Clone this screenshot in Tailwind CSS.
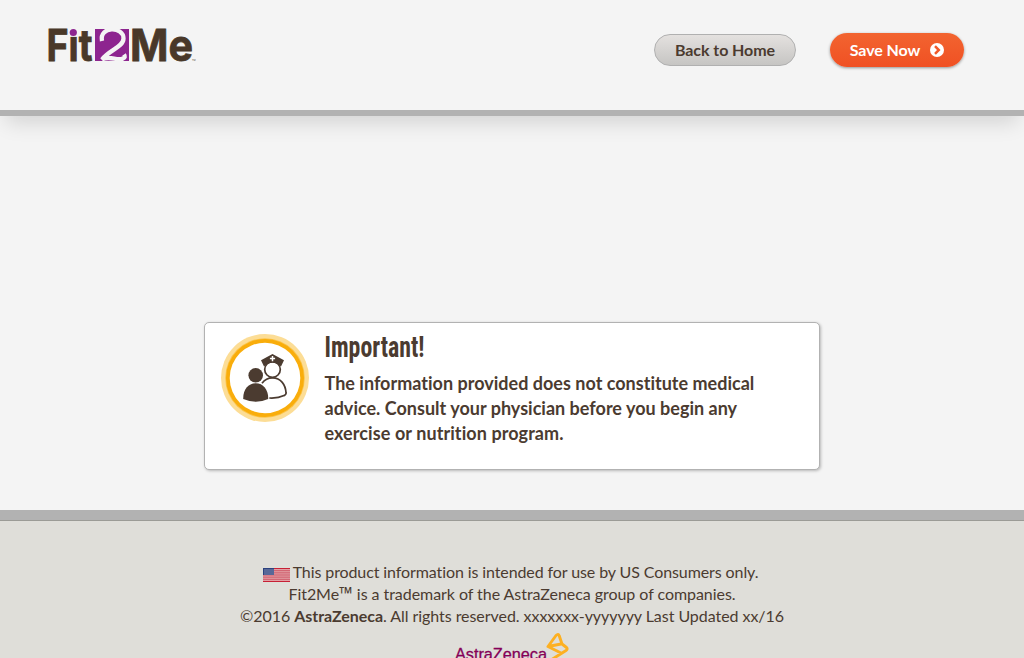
<!DOCTYPE html>
<html lang="en">
<head>
<meta charset="utf-8">
<title>Fit2Me</title>
<script src="https://cdn.jsdelivr.net/npm/@tailwindcss/browser@4"></script>
</head>
<body class="h-[658px] overflow-hidden bg-[#f4f4f4] font-[Lato,sans-serif] text-[#4b3b30] flex flex-col [font-variant-ligatures:none]">
<header class="h-[116px] shrink-0 border-b-6 border-[#b2b2b2] bg-[#f4f4f4] shadow-[0_12px_20px_-6px_rgba(0,0,0,0.14)] flex items-start justify-between pl-12 pr-[60px]">
  <svg class="mt-[26px] overflow-visible" width="150" height="40" viewBox="0 0 150 40" font-family="Inter" font-weight="700" fill="#493829" stroke="#493829">
    <text x="-1.500" y="35" font-size="44" textLength="46" stroke-width=".8" lengthAdjust="spacingAndGlyphs">Fit</text>
    <rect x="20.500" y="0" width="9.500" height="10.800" fill="#f4f4f4" stroke="none"/>
    <circle cx="25.300" cy="6.500" r="3.600" fill="#8d258f" stroke="none"/>
    <rect x="47" y="3" width="34" height="32" fill="#8d258f" stroke="none"/>
    <path d="M54 15C51 0 75.500 0 75.500 12.500C75.500 21 61 24 54 33.500C62 29 69 35.500 75 32.500Q78 31.500 76 28.500" fill="none" stroke="#f4f4f4" stroke-width="4.300"/>
    <text x="82" y="35" font-size="44" textLength="63" stroke-width=".8" lengthAdjust="spacingAndGlyphs">Me</text>
    <text x="144" y="35" font-size="2.300" font-weight="400" stroke="none">TM</text>
  </svg>
  <div class="flex items-start gap-[34px] mt-[33px] text-base font-bold">
    <button class="mt-px h-8 w-[142px] rounded-full border border-[#b0b0b0] bg-linear-to-b from-[#e4e1df] to-[#c6c5c3] whitespace-nowrap tracking-[-0.07px]">Back to Home</button>
    <button class="h-[34px] w-[134px] rounded-full bg-linear-to-b from-[#f26430] to-[#f05023] text-white shadow-[0_1px_3px_rgba(0,0,0,0.4)] flex items-center justify-center gap-[10px] whitespace-nowrap tracking-[-0.1px]">
      <span>Save Now</span>
      <svg width="14" height="14" viewBox="0 0 14 14"><circle cx="7" cy="7" r="7" fill="#fff"/><path d="M5 3.200L8.800 7L5 10.800" fill="none" stroke="#f15929" stroke-width="2.500"/></svg>
    </button>
  </div>
</header>
<main class="h-[394px] shrink-0 pt-[206px]">
  <section class="mx-auto w-[616px] h-[148px] rounded-[5px] border border-[#b2b2b2] bg-white shadow-[1px_1px_3px_rgba(0,0,0,0.25)] flex">
    <svg class="ml-4 mt-[11px]" width="88" height="88" viewBox="0 0 88 88">
      <circle cx="44" cy="44" r="44" fill="#fcdd96"/>
      <circle cx="44" cy="44" r="39.800" fill="#fbc54c"/>
      <circle cx="44" cy="44" r="39" fill="#f9ad0b"/>
      <circle cx="44" cy="44" r="35.300" fill="#fff"/>
      <g fill="#4b3b30">
        <circle cx="34.700" cy="41.300" r="7.300"/>
        <path d="M22.200 65C22 56 27 49.300 34.700 49.300S47.500 56 47.200 65Q35 70.500 22.200 65Z"/>
        <path d="M40 26.200L51.500 20L63 26.200L60 32.500Q51.500 25 43 32.500Z"/>
      </g>
      <g fill="none" stroke="#4b3b30" stroke-width="1.700">
        <circle cx="51.500" cy="35.500" r="7.800"/>
        <path d="M41 49.300Q45 43.900 51.500 43.900C60 43.900 64.500 51 65 58.500Q65.500 60.500 63 61.600Q57 64.500 48.300 64"/>
      </g>
      <path d="M51.500 22V27.200M48.900 24.600H54.100" stroke="#fff" stroke-width="1.500"/>
    </svg>
    <div class="ml-[15.500px] pt-[10px] flex flex-col">
      <svg class="h-[38px] w-[101px] overflow-visible" role="heading"><text x="-0.500" y="24" font-family="Roboto" font-stretch="condensed" font-size="29.500" font-weight="700" fill="#4b3b30" textLength="100" lengthAdjust="spacingAndGlyphs">Important!</text></svg>
      <p class="text-[18px] leading-[25px] font-bold whitespace-nowrap tracking-[0.01px]">The information provided does not constitute medical<br>advice. Consult your physician before you begin any<br><span class="tracking-[0.08px]">exercise or nutrition program.</span></p>
    </div>
  </section>
</main>
<footer class="grow shrink-0 bg-[#dfded9] border-t-10 border-[#b2b2b2]">
  <div class="border-t border-[#9b9b96] pt-10 flex flex-col items-center text-[16px] tracking-[-0.05px] leading-[22px] whitespace-nowrap">
    <p class="flex gap-[3px] tracking-[-0.1px] pr-[3px]"><svg class="mt-[7px]" width="27" height="14" viewBox="0 0 27 14"><rect width="27" height="14" fill="#e2a0a5"/><path d="M0 .500H27M0 13.500H27" stroke="#c72035"/><path d="M0 2.700H27M0 4.850H27M0 7H27M0 9.150H27M0 11.300H27" stroke="#cf5968"/><rect width="11" height="7" fill="#2c427e"/><rect x="1" y="1" width="10" height="6" fill="#586898"/></svg>This product information is intended for use by US Consumers only.</p>
    <p>Fit2Me<span class="font-[Open_Sans] text-[18px] leading-none">™</span> is a trademark of the AstraZeneca group of companies.</p>
    <p>©2016 <b>AstraZeneca</b>. All rights reserved. xxxxxxx-yyyyyyy Last Updated xx/16</p>
    <svg class="mt-[5px]" width="114" height="36" viewBox="0 0 114 36">
      <text x="0" y="27.500" font-family="Liberation Sans" font-size="17" fill="#860057" stroke="#860057" stroke-width=".3" textLength="92" lengthAdjust="spacingAndGlyphs">AstraZeneca</text>
      <path d="M107 21.500L93 14.500L101 3.500Q103.500 1 104.300 4L107 12L111.500 15.500Q113 17 111 18.500L96 28M93 14.500L106 12" fill="none" stroke="#fdb022" stroke-width="2.900" stroke-linejoin="round"/>
    </svg>
  </div>
</footer>
</body>
</html>
